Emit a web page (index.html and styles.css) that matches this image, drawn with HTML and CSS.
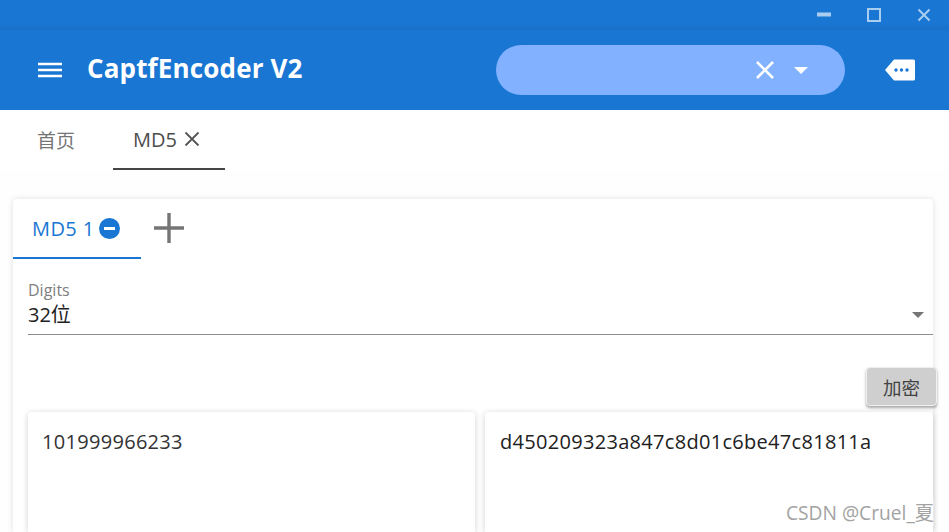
FILE: index.html
```html
<!DOCTYPE html>
<html>
<head>
    <meta charset="UTF-8">
    <title>CaptfEncoder V2</title>
    <link rel="stylesheet" href="styles.css">
</head>
<body>
    <div class="titlebar">
        <svg class="win-icon" width="16" height="16" viewBox="0 0 16 16"><rect x="1" y="5.500" width="14" height="4" fill="#a9cdf0"/></svg>
        <svg class="win-icon" width="16" height="16" viewBox="0 0 16 16"><rect x="2" y="2" width="12" height="12" fill="none" stroke="#a9cdf0" stroke-width="2"/></svg>
        <svg class="win-icon" width="16" height="16" viewBox="0 0 16 16"><path d="M2.500 2.500L13.500 13.500M13.500 2.500L2.500 13.500" stroke="#a9cdf0" stroke-width="2"/></svg>
    </div>

    <div class="toolbar">
        <svg class="menu-icon" width="26" height="16" viewBox="0 0 26 16"><path d="M1 2H25M1 8H25M1 14H25" stroke="#fff" stroke-width="2.400"/></svg>
        <div class="app-title">CaptfEncoder V2</div>
        <div class="search">
            <svg width="20" height="20" viewBox="0 0 20 20"><path d="M2 2L18 18M18 2L2 18" stroke="#fff" stroke-width="2.600"/></svg>
            <div class="search-arrow"></div>
        </div>
        <svg class="msg-icon" width="32" height="24" viewBox="0 0 32 24"><path d="M10 1.500H29.500Q31 1.500 31 3V21Q31 22.500 29.500 22.500H10L1 12Z" fill="#fff"/><circle cx="12" cy="12" r="1.700" fill="#1976d2"/><circle cx="17.500" cy="12" r="1.700" fill="#1976d2"/><circle cx="23" cy="12" r="1.700" fill="#1976d2"/></svg>
    </div>

    <div class="main-tabs">
        <div class="main-tab">首页</div>
        <div class="main-tab active">MD5
            <svg width="16" height="16" viewBox="0 0 16 16"><path d="M1.500 1.500L14.500 14.500M14.500 1.500L1.500 14.500" stroke="#555" stroke-width="1.800"/></svg>
        </div>
    </div>

    <div class="card">
        <div class="sub-tabs">
            <div class="sub-tab">MD5 1
                <svg width="21" height="21" viewBox="0 0 21 21"><circle cx="10.500" cy="10.500" r="10.500" fill="#1976d2"/><rect x="5" y="9" width="11" height="3" fill="#fff"/></svg>
            </div>
            <svg class="add-icon" width="30" height="30" viewBox="0 0 30 30"><path d="M15 0V30M0 15H30" stroke="#757575" stroke-width="3.400"/></svg>
        </div>

        <div class="field">
            <div class="field-label">Digits</div>
            <div class="field-value">32位<div class="field-arrow"></div></div>
        </div>

        <div class="actions">
            <button class="btn" type="button">加密</button>
        </div>

        <div class="panels">
            <div class="panel">101999966233</div>
            <div class="panel result">d450209323a847c8d01c6be47c81811a</div>
        </div>
    </div>

    <div class="watermark">CSDN @Cruel_夏</div>
</body>
</html>
```

FILE: styles.css
```css
body {
    margin: 0;
    height: 532px;
    overflow: hidden;
    background-color: #fefefe;
    font-family: "Open Sans", "Noto Sans CJK SC", sans-serif;
    color: #212121;
}

.titlebar {
    height: 30px;
    box-sizing: border-box;
    padding-right: 17px;
    display: flex;
    justify-content: flex-end;
    align-items: center;
    gap: 34px;
    background-color: #1976d2;
    background-image: linear-gradient(to bottom, #1976d2 24px, #1870c8 30px);
}

.win-icon {
    display: block;
    margin-top: -1px;
}

.toolbar {
    height: 80px;
    display: flex;
    align-items: center;
    background-color: #1976d2;
}

.menu-icon {
    margin-left: 37px;
}

.app-title {
    margin-left: 24px;
    margin-top: -5px;
    font-size: 26px;
    font-weight: 700;
    letter-spacing: 0.15px;
    color: #fff;
    flex: 1;
}

.search {
    width: 349px;
    height: 50px;
    box-sizing: border-box;
    border-radius: 25px;
    padding-right: 37px;
    display: flex;
    justify-content: flex-end;
    align-items: center;
    gap: 19px;
    background-color: #82b1ff;
}

.search-arrow {
    width: 0;
    height: 0;
    border-left: 7px solid transparent;
    border-right: 7px solid transparent;
    border-top: 7px solid #fff;
}

.msg-icon {
    margin-left: 39px;
    margin-right: 33px;
}

.main-tabs {
    height: 60px;
    display: flex;
    background-color: #fff;
}

.main-tab {
    box-sizing: border-box;
    height: 60px;
    padding-bottom: 1px;
    display: flex;
    align-items: center;
    font-size: 19px;
    color: #757575;
}

.main-tab:first-child {
    margin-left: 37px;
    width: 76px;
}

.main-tab.active {
    width: 112px;
    padding-left: 20px;
    padding-bottom: 0;
    gap: 7px;
    font-size: 20px;
    color: #4d4d4d;
    border-bottom: 2px solid #444;
}

.card {
    margin: 29px 16px 0 13px;
    height: 333px;
    border-radius: 4px 4px 0 0;
    background-color: #fff;
    box-shadow: 0 0 6px rgba(0, 0, 0, 0.12);
}

.sub-tabs {
    height: 60px;
    display: flex;
    align-items: flex-start;
}

.sub-tab {
    box-sizing: border-box;
    width: 128px;
    height: 60px;
    padding-left: 19px;
    display: flex;
    align-items: center;
    gap: 4px;
    font-size: 20px;
    letter-spacing: 0.4px;
    color: #1976d2;
    border-bottom: 2px solid #1976d2;
}

.add-icon {
    margin-left: 13px;
    margin-top: 14px;
}

.field {
    margin: 21px 0 0 15px;
    border-bottom: 1px solid #8c8c8c;
    height: 54px;
}

.field-label {
    font-size: 16px;
    line-height: 20px;
    color: #808080;
}

.field-value {
    display: flex;
    justify-content: space-between;
    align-items: center;
    font-size: 20px;
    line-height: 29px;
}

.field-arrow {
    margin-right: 9px;
    width: 0;
    height: 0;
    border-left: 6px solid transparent;
    border-right: 6px solid transparent;
    border-top: 6px solid #757575;
}

.actions {
    margin-top: 32px;
    display: flex;
    justify-content: flex-end;
    margin-right: -4px;
}

.btn {
    width: 71px;
    height: 39px;
    padding: 0;
    border: 1px solid #f0f0f0;
    border-radius: 4px;
    background-color: #cfcfcf;
    box-shadow: 0 2px 3px rgba(0, 0, 0, 0.35);
    font-family: inherit;
    font-size: 18.500px;
    color: #424242;
}

.panels {
    margin: 6px 0 0 15px;
    display: grid;
    grid-template-columns: 447px 448px;
    gap: 10px;
}

.panel {
    box-sizing: border-box;
    height: 120px;
    padding: 15px 14px;
    border-radius: 4px 4px 0 0;
    background-color: #fff;
    box-shadow: 0 1px 6px rgba(0, 0, 0, 0.18);
    font-size: 20px;
    letter-spacing: 0.3px;
    line-height: 30px;
    color: #333;
}

.panel.result {
    padding-left: 15px;
    color: #212121;
}

.watermark {
    position: absolute;
    right: 15px;
    top: 498px;
    font-size: 19.200px;
    color: #a3a3a3;
    background-color: rgba(255, 255, 255, 0.3);
}
```
